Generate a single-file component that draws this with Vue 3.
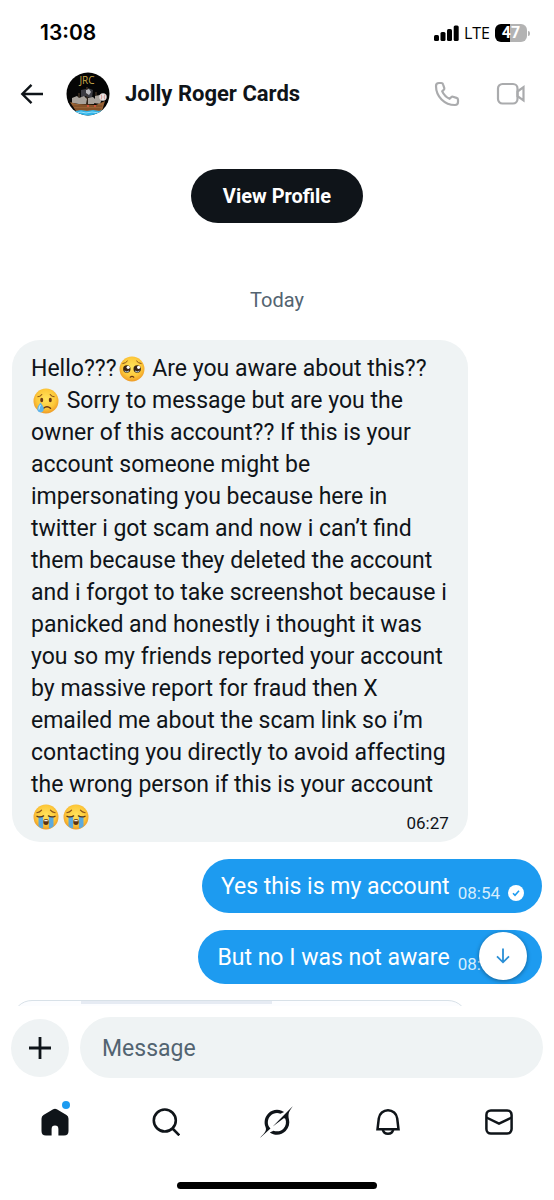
<script setup>
import { ref } from 'vue'

const draft = ref('')

const incoming = [
  [{ text: 'Hello???' }, { emoji: 'pleading' }, { text: ' Are you aware about this??' }],
  [{ emoji: 'crying' }, { text: ' Sorry to message but are you the' }],
  [{ text: 'owner of this account?? If this is your' }],
  [{ text: 'account someone might be' }],
  [{ text: 'impersonating you because here in' }],
  [{ text: 'twitter i got scam and now i can’t find' }],
  [{ text: 'them because they deleted the account' }],
  [{ text: 'and i forgot to take screenshot because i' }],
  [{ text: 'panicked and honestly i thought it was' }],
  [{ text: 'you so my friends reported your account' }],
  [{ text: 'by massive report for fraud then X' }],
  [{ text: 'emailed me about the scam link so i’m' }],
  [{ text: 'contacting you directly to avoid affecting' }],
  [{ text: 'the wrong person if this is your account' }],
  [{ emoji: 'sobbing' }, { emoji: 'sobbing' }],
]

const outgoing = [
  { text: 'Yes this is my account', time: '08:54' },
  { text: 'But no I was not aware', time: '08:54' },
]
</script>

<template>
  <div class="screen">
    <svg class="defs" width="0" height="0" aria-hidden="true">
      <defs>
        <radialGradient id="face" cx="50%" cy="42%" r="58%">
          <stop offset="0" stop-color="#ffe35c" />
          <stop offset="0.65" stop-color="#fdc93a" />
          <stop offset="1" stop-color="#ee9a26" />
        </radialGradient>
      </defs>
    </svg>

    <div class="status">
      <time class="clock">13:08</time>
      <div class="status-right">
        <svg width="25" height="16" viewBox="0 0 25 16" aria-hidden="true">
          <rect x="0" y="10" width="5" height="6" rx="1.5" />
          <rect x="6.5" y="7" width="5" height="9" rx="1.5" />
          <rect x="13" y="4" width="5" height="12" rx="1.5" />
          <rect x="19.7" y="0.5" width="5" height="15.5" rx="1.5" />
        </svg>
        <span class="network">LTE</span>
        <span class="battery-wrap">
          <span class="battery">47</span>
          <span class="battery-tip"></span>
        </span>
      </div>
    </div>

    <header class="header">
      <button class="icon-btn" aria-label="Back">
        <svg width="24" height="22" viewBox="0 0 24 22" fill="none" stroke="#0f1419" stroke-width="2.4">
          <path d="M23 11H2.5M11.5 1.8 2.3 11l9.2 9.2" />
        </svg>
      </button>
      <svg class="avatar" width="44" height="44" viewBox="0 0 44 44" role="img" aria-label="Jolly Roger Cards avatar">
        <defs>
          <clipPath id="round"><circle cx="22" cy="22" r="21.5" /></clipPath>
        </defs>
        <g clip-path="url(#round)">
          <rect width="44" height="44" fill="#050505" />
          <text x="21" y="12" class="avatar-text" text-anchor="middle">JRC</text>
          <path d="M21 15v17M13 21v11M30 20v12" stroke="#5d4630" stroke-width="1" />
          <path d="M15 18l5-1 1 7-6 1zM22 16l5 2-1 8-5-1z" fill="#3c3c42" />
          <path d="M6 26l5-2 3 3-1 5-7-1zM13 26l5-2 3 3-1 5-7 0zM22 26l5-1 3 3-2 4h-6zM29 24l5-1 2 4-2 5-5-1z" fill="#a9a39c" />
          <path d="M20 18l3-1 2 3-2 3-3-2z" fill="#b9b9bd" />
          <path d="M4 30l7 2 19 1 9-4-3 10H10z" fill="#986235" />
          <path d="M7 34h29M9 37h26" stroke="#6b3f1c" stroke-width="0.8" />
          <circle cx="22" cy="34" r="0.9" fill="#ef5644" />
          <circle cx="29" cy="34" r="0.9" fill="#ef5644" />
          <path d="M5 38l5 1 5-1 6 1 6-1 6 1 7-2v8H5z" fill="#31b5ea" />
          <path d="M10 41l5-1 5 1 6-1 7 1" fill="none" stroke="#a2e3fb" stroke-width="0.9" />
          <circle cx="37" cy="25" r="3.7" fill="#e9e4e2" />
          <path d="M35 22.5q1.7 2.5 0 5M39 22.5q-1.7 2.5 0 5" fill="none" stroke="#c66" stroke-width="0.6" />
        </g>
      </svg>
      <h1 class="name">Jolly Roger Cards</h1>
      <div class="calls">
        <button class="icon-btn" aria-label="Audio call">
          <svg width="26" height="26" viewBox="0 0 26 26" fill="none" stroke="#aaabad" stroke-width="2.2" stroke-linejoin="round">
            <path d="M2 5C2 3 3 2 5 2h2.200c1 0 1.700.6 1.900 1.500l1.200 3.600c.2.700 0 1.200-.5 1.700L8.200 10.400c1.600 3.500 4 5.900 7.400 7.400l1.600-1.600c.5-.5 1-.7 1.700-.5l3.600 1.200c.9.3 1.500.9 1.500 1.900V21c0 2-1 3-3 3C10.500 24 2 15.500 2 5z" />
          </svg>
        </button>
        <button class="icon-btn" aria-label="Video call">
          <svg width="30" height="24" viewBox="0 0 30 24" fill="none" stroke="#aaabad" stroke-width="2.2">
            <rect x="2" y="2" width="19.5" height="19.500" rx="4.5" />
            <path d="M21.5 9.500l6-4.300v13.200l-6-4.300z" />
          </svg>
        </button>
      </div>
    </header>

    <main class="thread">
      <button class="profile">View Profile</button>
      <p class="day">Today</p>

      <article class="bubble incoming">
        <p class="body">
          <span v-for="(line, i) in incoming" :key="i" class="line">
            <template v-for="(part, j) in line" :key="j">
              <span v-if="part.text" class="run">{{ part.text }}</span>
              <svg v-else-if="part.emoji === 'pleading'" class="emoji" viewBox="0 0 26 26" role="img" aria-label="Pleading face">
                <circle cx="13" cy="13" r="12.5" fill="url(#face)" />
                <circle cx="7.8" cy="13" r="3.7" fill="#3b2413" />
                <circle cx="18.2" cy="13" r="3.7" fill="#3b2413" />
                <circle cx="9.2" cy="11.3" r="1.6" fill="#fff" />
                <circle cx="19.6" cy="11.3" r="1.6" fill="#fff" />
                <path d="M5.500 15q2.300 1.800 4.500 0M16 15q2.300 1.800 4.500 0" fill="none" stroke="#a9c5d4" stroke-width="1" />
                <path d="M3.800 7.600q3-.4 4.600-2.500M22.200 7.600q-3-.4-4.600-2.500" fill="none" stroke="#8a5318" stroke-width="1" stroke-linecap="round" />
                <path d="M11.200 21.200q1.800-1.500 3.600 0" fill="none" stroke="#6a3712" stroke-width="1.2" stroke-linecap="round" />
              </svg>
              <svg v-else-if="part.emoji === 'crying'" class="emoji" viewBox="0 0 26 26" role="img" aria-label="Crying face">
                <circle cx="13" cy="13" r="12.5" fill="url(#face)" />
                <ellipse cx="8.7" cy="12" rx="1.5" ry="2.2" fill="#6a3712" />
                <ellipse cx="17.3" cy="12" rx="1.5" ry="2.2" fill="#6a3712" />
                <path d="M4.800 8.800q2.600-.3 4-2.300M21.200 8.800q-2.600-.3-4-2.300" fill="none" stroke="#8a5318" stroke-width="1.1" stroke-linecap="round" />
                <path d="M10.500 20.200q3.500-3 7 0" fill="none" stroke="#6a3712" stroke-width="1.5" stroke-linecap="round" />
                <path d="M7.500 14.500q4 5 3.200 7.600a3.300 3.300 0 0 1-6.400 0q-.6-2.600 3.200-7.600z" fill="#5fb4ea" />
                <path d="M7.500 17q-1.800 2.600-1.500 4.600" fill="none" stroke="#c5e9fb" stroke-width="1.2" />
              </svg>
              <svg v-else class="emoji" viewBox="0 0 26 26" role="img" aria-label="Loudly crying face">
                <circle cx="13" cy="13" r="12.5" fill="url(#face)" />
                <path d="M5.500 12.500h4.600v12q-2.700-.6-4.600-2.300zM15.900 12.500h4.600v9.700q-1.900 1.700-4.600 2.300z" fill="#5ba9e0" />
                <path d="M4 12.300q3.400 1.500 6.600-.4M22 12.300q-3.400 1.500-6.600-.4" fill="none" stroke="#5a3413" stroke-width="1.3" stroke-linecap="round" />
                <path d="M3.800 8.800q3-.4 4.800-2.600M22.200 8.800q-3-.4-4.800-2.600" fill="none" stroke="#8a5318" stroke-width="1.1" stroke-linecap="round" />
                <ellipse cx="13" cy="18" rx="2.7" ry="3" fill="#5c2f10" />
                <path d="M11.200 16.300q1.800-1 3.600 0v1h-3.600z" fill="#f7efe4" />
              </svg>
            </template>
          </span>
        </p>
        <time class="stamp">06:27</time>
      </article>

      <article v-for="(m, i) in outgoing" :key="i" class="bubble outgoing">
        <p class="body">{{ m.text }}</p>
        <time class="sent">{{ m.time }}</time>
        <svg class="read" width="16" height="16" viewBox="0 0 16 16" role="img" aria-label="Read">
          <circle cx="8" cy="8" r="8" fill="#fff" />
          <path d="M5 8.300l2 2 4-4.500" fill="none" stroke="#1d9bf0" stroke-width="1.6" />
        </svg>
      </article>

      <div class="next"><div class="next-media"></div></div>

      <button class="jump" aria-label="Scroll to latest">
        <svg width="16" height="18" viewBox="0 0 16 18" fill="none" stroke="#2a8fd6" stroke-width="1.8">
          <path d="M8 1.500v13.500M2 9.300l6 6 6-6" />
        </svg>
      </button>
    </main>

    <form class="composer" @submit.prevent>
      <button type="button" class="add" aria-label="Add attachment">
        <svg width="22" height="22" viewBox="0 0 22 22" stroke="#0f1419" stroke-width="2.8">
          <path d="M11 0v22M0 11h22" />
        </svg>
      </button>
      <input v-model="draft" class="field" type="text" placeholder="Message" aria-label="Message" />
    </form>

    <nav class="tabs" aria-label="Main">
      <a href="#home" class="tab" aria-label="Home">
        <svg width="28" height="28" viewBox="0 0 28 28">
          <path d="M12.200 1.200q1.800-1 3.600 0l9.700 5.900q2 1.200 2 3.600v12.300q0 4.500-4.500 4.500h-5.600v-6.500a3.400 3.400 0 0 0-6.800 0v6.500H5q-4.500 0-4.500-4.500V10.700q0-2.400 2-3.600z" fill="#0f1419" />
        </svg>
        <span class="dot"></span>
      </a>
      <a href="#search" class="tab" aria-label="Search">
        <svg width="28" height="28" viewBox="0 0 28 28" fill="none" stroke="#0f1419" stroke-width="2.6">
          <circle cx="12.8" cy="12.5" r="11" />
          <path d="M20.500 20.500l6.800 6.800" />
        </svg>
      </a>
      <a href="#grok" class="tab" aria-label="Grok">
        <svg width="33" height="32" viewBox="0 0 33 32" fill="#0f1419">
          <path d="M12.745 20.540l10.970-8.190c.539-.4 1.307-.244 1.564.38 1.349 3.288.746 7.241-1.938 9.955-2.683 2.714-6.417 3.310-9.830 1.954l-3.728 1.745c5.347 3.697 11.840 2.782 15.898-1.324 3.219-3.255 4.216-7.692 3.284-11.693l.008.009c-1.351-5.878.332-8.227 3.782-13.031L33 0l-4.540 4.590v-.014L12.743 20.544m-2.263 1.987c-3.837-3.707-3.175-9.446.1-12.755 2.420-2.449 6.388-3.448 9.852-1.979l3.720-1.737c-.67-.49-1.530-1.017-2.515-1.387-4.455-1.854-9.789-.931-13.410 2.728-3.483 3.523-4.579 8.940-2.697 13.561 1.405 3.454-.899 5.898-3.220 8.364C1.490 30.200.666 31.074 0 32l10.478-9.466" />
        </svg>
      </a>
      <a href="#notifications" class="tab" aria-label="Notifications">
        <svg width="26" height="28" viewBox="0 0 26 28" fill="none" stroke="#0f1419" stroke-width="2.5">
          <path d="M2.500 21.300L3.800 10.300a9.270 9.270 0 0 1 18.400 0l1.300 11z" />
          <path d="M7.800 21.500a5.300 5.300 0 0 0 10.400 0" />
        </svg>
      </a>
      <a href="#messages" class="tab" aria-label="Messages">
        <svg width="28" height="26" viewBox="0 0 28 26" fill="none" stroke="#0f1419" stroke-width="2.5">
          <rect x="1.4" y="1.4" width="25.200" height="23.200" rx="4.5" />
          <path d="M1.400 8.500L14 14.700l12.600-6.200" />
        </svg>
      </a>
    </nav>
    <div class="home-bar"></div>
  </div>
</template>

<style>
body {
  background: #fff;
}
</style>

<style scoped>
.screen {
  display: flex;
  flex-direction: column;
  height: 100vh;
  background: #fff;
  color: #0f1419;
  font-family: Roboto, "Liberation Sans", sans-serif;
}

.defs {
  position: absolute;
}

p,
h1 {
  margin: 0;
}

button {
  border: 0;
  padding: 0;
  font-family: inherit;
  cursor: pointer;
}

.status {
  display: flex;
  align-items: center;
  justify-content: space-between;
  padding: 0 24px 0 40px;
  height: 66px;
  flex-shrink: 0;
  color: #000;
}

.clock {
  font: 600 21px/24px Inter, sans-serif;
}

.status-right {
  display: flex;
  align-items: center;
  gap: 5px;
}

.network {
  font: 400 16px/20px "Open Sans", sans-serif;
}

.battery-wrap {
  display: flex;
  align-items: center;
  gap: 1px;
}

.battery {
  width: 32px;
  border-radius: 6px;
  background: linear-gradient(90deg, #000 48%, #b3b3b3 48%);
  color: #fff;
  text-align: center;
  font: 700 16px/18px Roboto, sans-serif;
}

.battery-tip {
  width: 2px;
  height: 5px;
  border-radius: 0 2px 2px 0;
  background: #b3b3b3;
}

.header {
  display: flex;
  align-items: center;
  height: 56px;
  padding: 0 28px 0 20px;
  flex-shrink: 0;
}

.icon-btn {
  display: flex;
  background: none;
}

.avatar {
  margin: 0 15px 0 22px;
}

.avatar-text {
  font: 400 10px "Open Sans", sans-serif;
  fill: #c9a94b;
}

.name {
  font-size: 22px;
  line-height: 28px;
  font-weight: 700;
}

.calls {
  display: flex;
  align-items: center;
  gap: 36px;
  margin-left: auto;
}

.thread {
  position: relative;
  flex: 1;
  min-height: 0;
  overflow: hidden;
  display: flex;
  flex-direction: column;
  padding: 47px 12px 0;
}

.thread > * {
  flex-shrink: 0;
}

.profile {
  align-self: center;
  padding: 0 32px;
  border-radius: 27px;
  background: #0f1419;
  color: #fff;
  font-size: 20px;
  line-height: 54px;
  font-weight: 700;
}

.day {
  margin: 65px 0 28px;
  text-align: center;
  color: #536471;
  font-size: 20px;
  line-height: 24px;
}

.bubble .body {
  font-size: 23px;
  line-height: 32px;
}

.incoming {
  position: relative;
  align-self: flex-start;
  width: 86%;
  box-sizing: border-box;
  padding: 13px 19px 9px;
  border-radius: 28px;
  background: #eff3f4;
}

.line {
  display: flex;
  align-items: center;
  height: 32px;
}

.run {
  white-space: pre;
}

.emoji {
  width: 26px;
  height: 26px;
  margin: 0 2px;
}

.stamp {
  position: absolute;
  right: 19px;
  bottom: 9px;
  font-size: 17px;
  line-height: 20px;
}

.outgoing {
  display: flex;
  align-items: center;
  align-self: flex-end;
  margin-top: 17px;
  padding: 12px 18px 10px 19px;
  border-radius: 27px;
  background: #1d9bf0;
  color: #fff;
}

.sent {
  margin: 12px 8px 0;
  font-size: 17px;
  line-height: 20px;
  color: #d5edfd;
}

.read {
  margin-top: 12px;
}

.next {
  width: 86%;
  height: 60px;
  box-sizing: border-box;
  margin-top: 16px;
  border: 1px solid #d8e1e8;
  border-radius: 20px;
  overflow: hidden;
  background: #fcfdff;
}

.next-media {
  width: 42%;
  height: 3px;
  margin-left: 15%;
  background: #e6ebf3;
}

.jump {
  position: absolute;
  right: 27px;
  bottom: 26px;
  display: flex;
  align-items: center;
  justify-content: center;
  width: 48px;
  height: 48px;
  border-radius: 50%;
  background: #fff;
  box-shadow: 0 1px 4px rgba(0, 0, 0, 0.4);
}

.composer {
  display: flex;
  align-items: center;
  gap: 11px;
  padding: 11px 11px 0;
  flex-shrink: 0;
}

.add {
  display: flex;
  align-items: center;
  justify-content: center;
  width: 58px;
  height: 58px;
  flex-shrink: 0;
  border-radius: 50%;
  background: #eff3f4;
}

.field {
  flex: 1;
  min-width: 0;
  height: 61px;
  box-sizing: border-box;
  padding: 2px 22px 0;
  border: 0;
  border-radius: 31px;
  background: #eff3f4;
  color: #0f1419;
  font: 400 23px/32px Roboto, "Liberation Sans", sans-serif;
}

.field::placeholder {
  color: #536471;
  opacity: 1;
}

.tabs {
  display: grid;
  grid-template-columns: repeat(5, 1fr);
  height: 88px;
  flex-shrink: 0;
}

.tab {
  position: relative;
  display: flex;
  align-items: center;
  justify-content: center;
}

.dot {
  position: absolute;
  left: calc(50% + 7px);
  top: 23px;
  width: 8px;
  height: 8px;
  border-radius: 50%;
  background: #1d9bf0;
}

.home-bar {
  align-self: center;
  width: 36%;
  height: 7px;
  margin: 16px 0 11px;
  border-radius: 4px;
  background: #000;
  flex-shrink: 0;
}
</style>
